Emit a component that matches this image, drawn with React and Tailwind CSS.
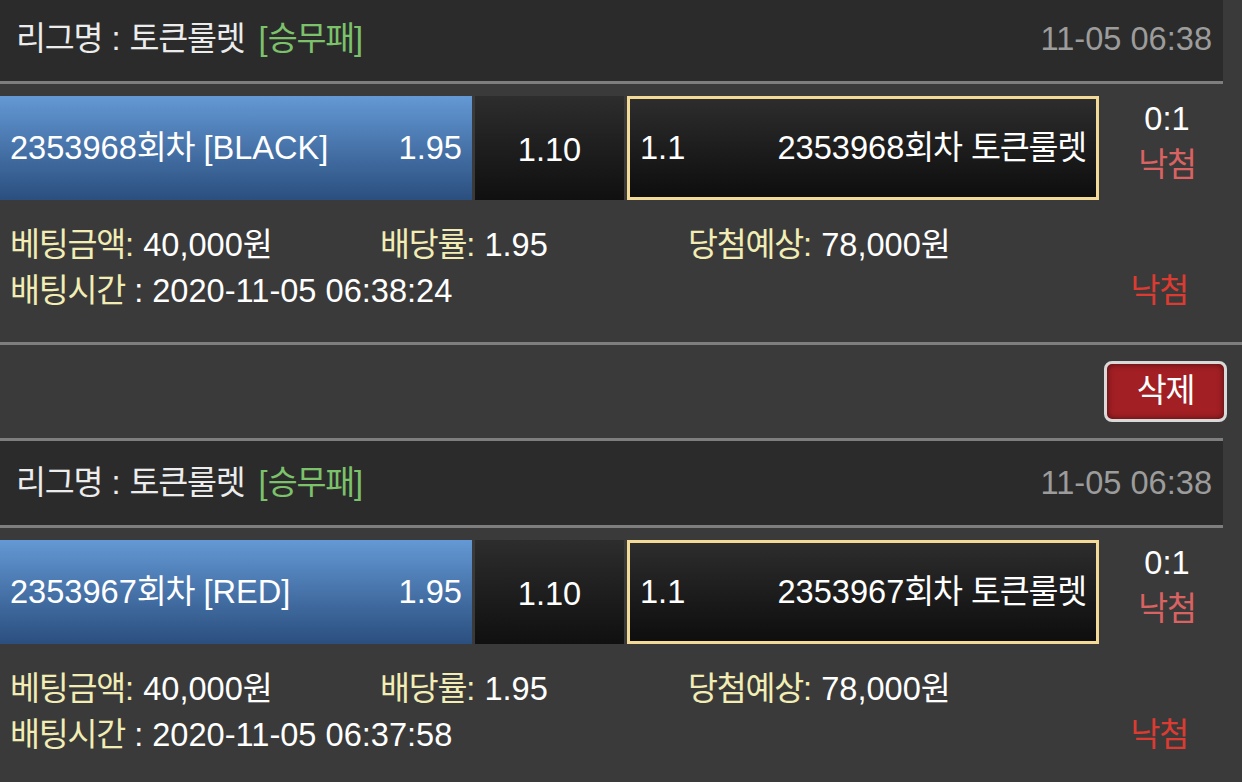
import React from "react";

const bets = [
    { round: "2353968", pick: "BLACK", time: "2020-11-05 06:38:24", resultColor: "text-[#d96262]" },
    { round: "2353967", pick: "RED", time: "2020-11-05 06:37:58", resultColor: "text-[#d96262]" },
];

// Hangul runs get slightly tighter tracking so widths match the narrower system font
const T = ({ children }) => {
    const parts = String(children).split(/([\uAC00-\uD7A3]+)/);
    return parts.map((p, i) =>
        /[\uAC00-\uD7A3]/.test(p) ? (
            <span key={i} className="tracking-[-1.2px]">{p}</span>
        ) : (
            <React.Fragment key={i}>{p}</React.Fragment>
        )
    );
};

const BetCard = ({ bet, last }) => {
    return (
        <div>
            <div className="w-[1223px] h-[90px] border-y-[3px] border-[#7e7e7e] bg-[#2b2b2b] flex items-center justify-between pl-[16px] pr-[11px]">
                <div className="text-[#ececec]">
                    <T>리그명 : 토큰룰렛</T>
                    <span className="ml-[14px] text-[#7cc26b]">[<T>승무패</T>]</span>
                </div>
                <div className="text-[#9c9c9c]">11-05 06:38</div>
            </div>

            <div className="mt-[12px] h-[104px] flex gap-[3px]">
                <div className="w-[472px] flex items-center justify-between px-[10px] bg-gradient-to-b from-[#6499d5] to-[#2b4f7f] text-white">
                    <span><T>{`${bet.round}회차`}</T> [{bet.pick}]</span>
                    <span>1.95</span>
                </div>
                <div className="w-[149px] flex items-center justify-center bg-gradient-to-b from-[#2d2d2d] to-[#101010] text-white pt-[4px]">
                    1.10
                </div>
                <div className="w-[472px] flex items-center justify-between pl-[10px] pr-[10px] border-[3px] border-[#f3da96] bg-gradient-to-b from-[#2d2d2d] to-[#0e0e0e] text-white">
                    <span>1.1</span>
                    <span><T>{`${bet.round}회차 토큰룰렛`}</T></span>
                </div>
                <div className="flex-1 flex flex-col items-center pr-[10px] leading-[46px]">
                    <span className="text-white">0:1</span>
                    <span className={bet.resultColor}><T>낙첨</T></span>
                </div>
            </div>

            <div className="pt-[22px] pb-[28px] pl-[10px] leading-[46px] text-white">
                <div className="flex">
                    <div className="w-[370px]">
                        <span className="text-[#f1edb4]"><T>베팅금액</T>:</span> 40,000<T>원</T>
                    </div>
                    <div className="w-[308px]">
                        <span className="text-[#f1edb4]"><T>배당률</T>:</span> 1.95
                    </div>
                    <div>
                        <span className="text-[#f1edb4]"><T>당첨예상</T>:</span> 78,000<T>원</T>
                    </div>
                </div>
                <div className="flex justify-between pr-[54px]">
                    <div>
                        <span className="text-[#f1edb4]"><T>배팅시간</T></span> : {bet.time}
                    </div>
                    <span className="text-[#dc3b31]"><T>낙첨</T></span>
                </div>
            </div>

            {!last && (
                <div className="h-[96px] border-t-[3px] border-[#7e7e7e] flex items-center justify-end pr-[15px]">
                    <button className="w-[123px] h-[61px] rounded-[8px] border-[3px] border-[#d9d9d9] bg-[#a21f24] shadow-[inset_0_0_6px_rgba(0,0,0,0.55)] text-white flex items-center justify-center">
                        <T>삭제</T>
                    </button>
                </div>
            )}
        </div>
    );
};

export default function App() {
    return (
        <div
            className="h-[782px] overflow-hidden bg-[#3a3a3a] text-[32.6px]"
            style={{ fontFamily: '"Liberation Sans", "Noto Sans CJK KR", sans-serif' }}
        >
            <div className="-mt-[6px]">
                {bets.map((b, i) => (
                    <BetCard key={b.round} bet={b} last={i === bets.length - 1} />
                ))}
            </div>
        </div>
    );
}
